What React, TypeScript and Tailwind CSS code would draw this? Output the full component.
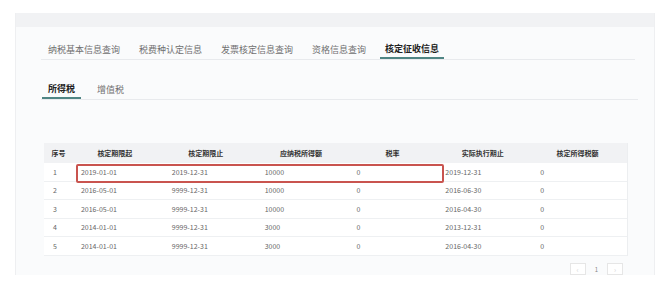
import React from 'react';

const tabs = ['纳税基本信息查询', '税费种认定信息', '发票核定信息查询', '资格信息查询', '核定征收信息'];

const columns = [
  { title: '序号', w: 'w-[29px]', pad: 'pl-[9px]' },
  { title: '核定期限起', w: 'w-[84px]', pad: 'pl-[8px]' },
  { title: '核定期限止', w: 'w-[98px]', pad: 'pl-[15px]' },
  { title: '应纳税所得额', w: 'w-[93px]', pad: 'pl-[10px]' },
  { title: '税率', w: 'w-[90px]', pad: 'pl-[9px]' },
  { title: '实际执行期止', w: 'w-[91px]', pad: 'pl-[8px]' },
  { title: '核定所得税额', w: 'w-[99px]', pad: 'pl-[12px]' },
];

const rows = [
  ['1', '2019-01-01', '2019-12-31', '10000', '0', '2019-12-31', '0'],
  ['2', '2016-05-01', '9999-12-31', '10000', '0', '2016-06-30', '0'],
  ['3', '2016-05-01', '9999-12-31', '10000', '0', '2016-04-30', '0'],
  ['4', '2014-01-01', '9999-12-31', '3000', '0', '2013-12-31', '0'],
  ['5', '2014-01-01', '9999-12-31', '3000', '0', '2016-04-30', '0'],
];

export default function App() {
  return (
    <div
      className="w-[666px] h-[307px] bg-white pt-[13px] pl-[15px] overflow-hidden"
      style={{ fontFamily: '"Noto Sans CJK SC", "Noto Sans", sans-serif' }}
    >
      <div className="w-[640px] h-[262px] flex flex-col border-l border-r border-[#eeeff1]">
        {/* top strip */}
        <div className="h-[14px] bg-[#f1f2f4]" />

        <div className="flex-1 bg-[#fafbfc] pl-[25px] pr-[19px] flex flex-col">
          {/* main tabs */}
          <div className="mt-[13px] flex gap-[9px] border-b border-[#e8eaed] pl-[2px]">
            {tabs.map((t, i) => {
              const active = i === tabs.length - 1;
              return (
                <div
                  key={t}
                  className={
                    active
                      ? 'h-[19px] px-[5px] flex items-center text-[9px] font-bold text-[#222] border-b-2 border-[#4f8584] -mb-px'
                      : 'h-[19px] px-[5px] flex items-center text-[9px] text-[#707070]'
                  }
                >
                  {t}
                </div>
              );
            })}
          </div>

          {/* sub tabs */}
          <div className="mt-[20px] flex gap-[10px] border-b border-[#e8eaed] pl-[1px] mr-[-3px]">
            <div className="h-[19px] px-[6px] flex items-center text-[9px] font-bold text-[#222] border-b-2 border-[#4f8584] -mb-px">
              所得税
            </div>
            <div className="h-[19px] px-[6px] flex items-center text-[9px] text-[#707070]">增值税</div>
          </div>

          {/* table */}
          <div className="relative mt-[43px] ml-[3px] w-[584px] bg-white border-r border-[#eceef0]">
            <div className="flex h-[20px] bg-[#f1f2f4] items-center">
              {columns.map((c) => (
                <div key={c.title} className={`${c.w} text-center text-[7px] font-bold text-[#333]`}>
                  {c.title}
                </div>
              ))}
            </div>
            {rows.map((r) => (
              <div key={r[0]} className="flex h-[18.6px] items-center border-b border-[#eef0f2]">
                {r.map((v, i) => (
                  <div key={i} className={`${columns[i].w} ${columns[i].pad} text-[7px] text-[#666]`}>
                    {v}
                  </div>
                ))}
              </div>
            ))}

            {/* highlight annotation */}
            <div className="absolute left-[32px] top-[21px] w-[368px] h-[19px] border-2 border-[#c9544f] rounded-[2px]" />
          </div>

          {/* pagination */}
          <div className="mt-auto flex items-center justify-end gap-[9px] pr-[12px]">
            <div className="w-[16px] h-[12px] border border-[#e6e6e6] bg-white flex items-center justify-center text-[7px] text-[#d4d4d4]">
              ‹
            </div>
            <div className="text-[6px] text-[#888]">1</div>
            <div className="w-[16px] h-[12px] border border-[#e6e6e6] bg-white flex items-center justify-center text-[7px] text-[#d4d4d4]">
              ›
            </div>
          </div>
        </div>
      </div>
    </div>
  );
}
